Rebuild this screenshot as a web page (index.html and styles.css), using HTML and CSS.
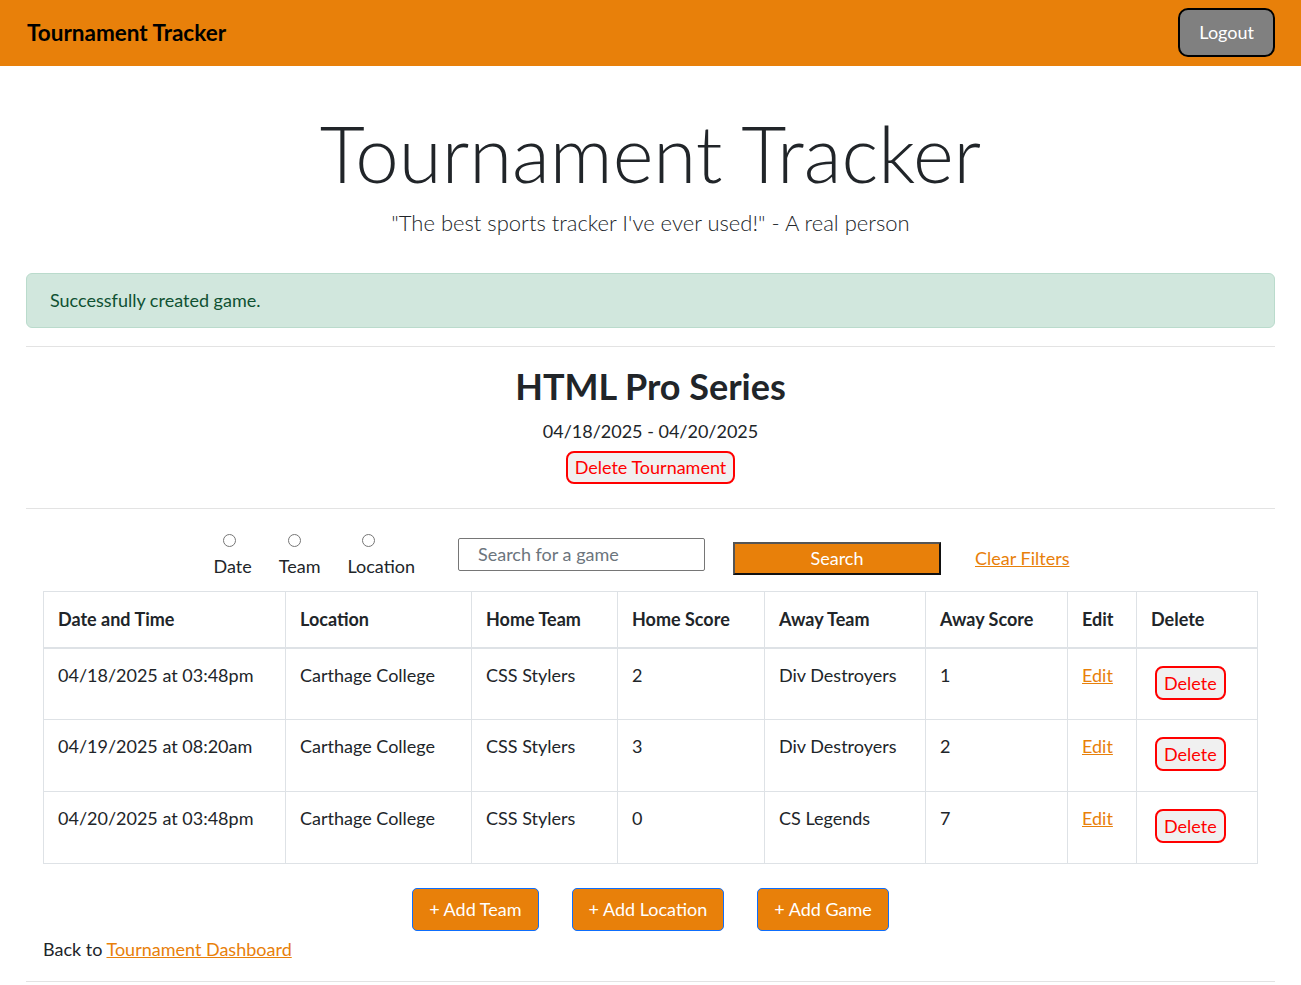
FILE: index.html
```html
<!DOCTYPE html>
<html lang="en">
<head>
<meta charset="utf-8">
<title>Tournament Tracker</title>
<link rel="stylesheet" href="styles.css">
</head>
<body>
<nav class="navbar">
  <span class="brand">Tournament Tracker</span>
  <button class="logout" type="button">Logout</button>
</nav>
<main class="page">
  <header class="hero">
    <h1 class="display">Tournament Tracker</h1>
    <p class="lead">"The best sports tracker I've ever used!" - A real person</p>
  </header>
  <div class="alert">Successfully created game.</div>
  <hr class="rule">
  <section class="tourn">
    <h2 class="tourn-title">HTML Pro Series</h2>
    <p class="tourn-dates">04/18/2025 - 04/20/2025</p>
    <button class="btn-del btn-del-lg" type="button">Delete Tournament</button>
  </section>
  <hr class="rule">
  <form class="filters" onsubmit="return false">
    <div class="radios">
      <label class="radio-opt"><input type="radio" name="f"><span>Date</span></label>
      <label class="radio-opt"><input type="radio" name="f"><span>Team</span></label>
      <label class="radio-opt radio-wide"><input type="radio" name="f"><span>Location</span></label>
    </div>
    <input class="search-input" type="text" placeholder="Search for a game">
    <button class="search-btn" type="button">Search</button>
    <a class="link clear" href="#">Clear Filters</a>
  </form>
  <table class="games">
    <thead>
      <tr>
        <th class="c1">Date and Time</th>
        <th class="c2">Location</th>
        <th class="c3">Home Team</th>
        <th class="c4">Home Score</th>
        <th class="c5">Away Team</th>
        <th class="c6">Away Score</th>
        <th class="c7">Edit</th>
        <th class="c8">Delete</th>
      </tr>
    </thead>
    <tbody>
      <tr>
        <td>04/18/2025 at 03:48pm</td>
        <td>Carthage College</td>
        <td>CSS Stylers</td>
        <td>2</td>
        <td>Div Destroyers</td>
        <td>1</td>
        <td><a class="link" href="#">Edit</a></td>
        <td><button class="btn-del btn-del-sm" type="button">Delete</button></td>
      </tr>
      <tr>
        <td>04/19/2025 at 08:20am</td>
        <td>Carthage College</td>
        <td>CSS Stylers</td>
        <td>3</td>
        <td>Div Destroyers</td>
        <td>2</td>
        <td><a class="link" href="#">Edit</a></td>
        <td><button class="btn-del btn-del-sm" type="button">Delete</button></td>
      </tr>
      <tr>
        <td>04/20/2025 at 03:48pm</td>
        <td>Carthage College</td>
        <td>CSS Stylers</td>
        <td>0</td>
        <td>CS Legends</td>
        <td>7</td>
        <td><a class="link" href="#">Edit</a></td>
        <td><button class="btn-del btn-del-sm" type="button">Delete</button></td>
      </tr>
    </tbody>
  </table>
  <div class="actions">
    <button class="btn-add" type="button">+ Add Team</button>
    <button class="btn-add" type="button">+ Add Location</button>
    <button class="btn-add" type="button">+ Add Game</button>
  </div>
  <p class="back">Back to <a class="link" href="#">Tournament Dashboard</a></p>
  <hr class="rule">
</main>
</body>
</html>
```

FILE: styles.css
```css
* { box-sizing: border-box; }
html { font-size: 18px; }
body {
  margin: 0;
  font-family: Lato, "Open Sans", sans-serif;
  font-size: 18px;
  line-height: 1.5;
  color: #212529;
  background: #fff;
}
.navbar {
  display: flex;
  align-items: center;
  justify-content: space-between;
  height: 66px;
  padding: 0 26px 0 27px;
  background: #e8800a;
}
.brand {
  font-size: 22.5px;
  font-weight: 700;
  color: #000;
}
.logout {
  font-family: inherit;
  font-size: 18px;
  line-height: 27px;
  padding: 9px 19px;
  color: #fff;
  background: #808080;
  border: 2px solid #000;
  border-radius: 10px;
  margin-top: -1px;
}
.page { padding: 0 26px; }
.hero { text-align: center; }
.display {
  margin: 41px 0 0;
  font-size: 78px;
  font-weight: 300;
  line-height: 1.2;
}
.lead {
  margin: 5px 0 34px;
  font-size: 22px;
  font-weight: 300;
}
.alert {
  padding: 13px 23px;
  color: #0f5132;
  background: #d1e7dd;
  border: 1px solid #badbcc;
  border-radius: 6px;
}
.rule {
  margin: 18px 0;
  border: 0;
  border-top: 1px solid #e3e3e3;
}
.tourn { text-align: center; padding-bottom: 6px; }
.tourn-title {
  margin: 2px 0 0;
  font-size: 36px;
  font-weight: 700;
  line-height: 1.2;
}
.tourn-dates { margin: 10px 0 6px; }
.btn-del {
  font-family: inherit;
  color: #ff0000;
  background: #f0f0f0;
  border: 2px solid #ff0000;
  border-radius: 8px;
  font-size: 18px;
  line-height: 24px;
  cursor: pointer;
}
.btn-del-lg { padding: 2px 7px; line-height: 25px; }
.btn-del-sm { padding: 3px 7px; margin: 4px 0 0 4px; }
.filters {
  display: flex;
  align-items: flex-start;
  justify-content: center;
  padding-right: 18px;
  margin-top: 25px;
}
.radios { display: flex; gap: 27px; margin-right: 43px; }
.radio-opt {
  display: flex;
  flex-direction: column;
  align-items: flex-start;
}
.radio-opt input {
  margin: 0 0 0 9px;
  width: 13px;
  height: 13px;
}
.radio-wide input { margin-left: 15px; }
.radio-opt span { margin-top: 6px; }
.search-input {
  width: 247px;
  height: 33px;
  padding: 0 19px;
  font-family: inherit;
  font-size: 18px;
  border: 1px solid #767676;
  border-radius: 2px;
  margin-top: 4px;
}
.search-input::placeholder { color: #6c757d; }
.search-btn {
  width: 208px;
  height: 33px;
  margin: 8px 0 0 28px;
  font-family: inherit;
  font-size: 18px;
  color: #fff;
  background: #e8800a;
  border: 2px solid;
  border-color: #555 #111 #111 #555;
}
.clear { margin: 11px 0 0 34px; }
.link { color: #e8800a; text-decoration: underline; }
.games {
  width: calc(100% - 34px);
  margin: 11px 17px 0;
  border-collapse: collapse;
}
.games th, .games td {
  border: 1px solid #dee2e6;
  text-align: left;
  vertical-align: top;
  padding: 14px;
}
.games th { font-weight: 700; height: 55px; }
.games thead tr { border-bottom: 2px solid #dee2e6; }
.games td { padding: 13px 14px 16px; height: 72px; }
.c1 { width: 242px; }
.c2 { width: 186px; }
.c3 { width: 146px; }
.c4 { width: 147px; }
.c5 { width: 161px; }
.c6 { width: 142px; }
.c7 { width: 69px; }
.c8 { width: 121px; }
.actions {
  display: flex;
  justify-content: center;
  gap: 33px;
  margin-top: 24px;
}
.btn-add {
  font-family: inherit;
  font-size: 18px;
  line-height: 27px;
  padding: 7px 16px;
  color: #fff;
  background: #e8800a;
  border: 1px solid #0d6efd;
  border-radius: 5px;
}
.back { margin: 5px 17px 0; }
.page > .rule:last-child { margin-top: 18px; }
```
